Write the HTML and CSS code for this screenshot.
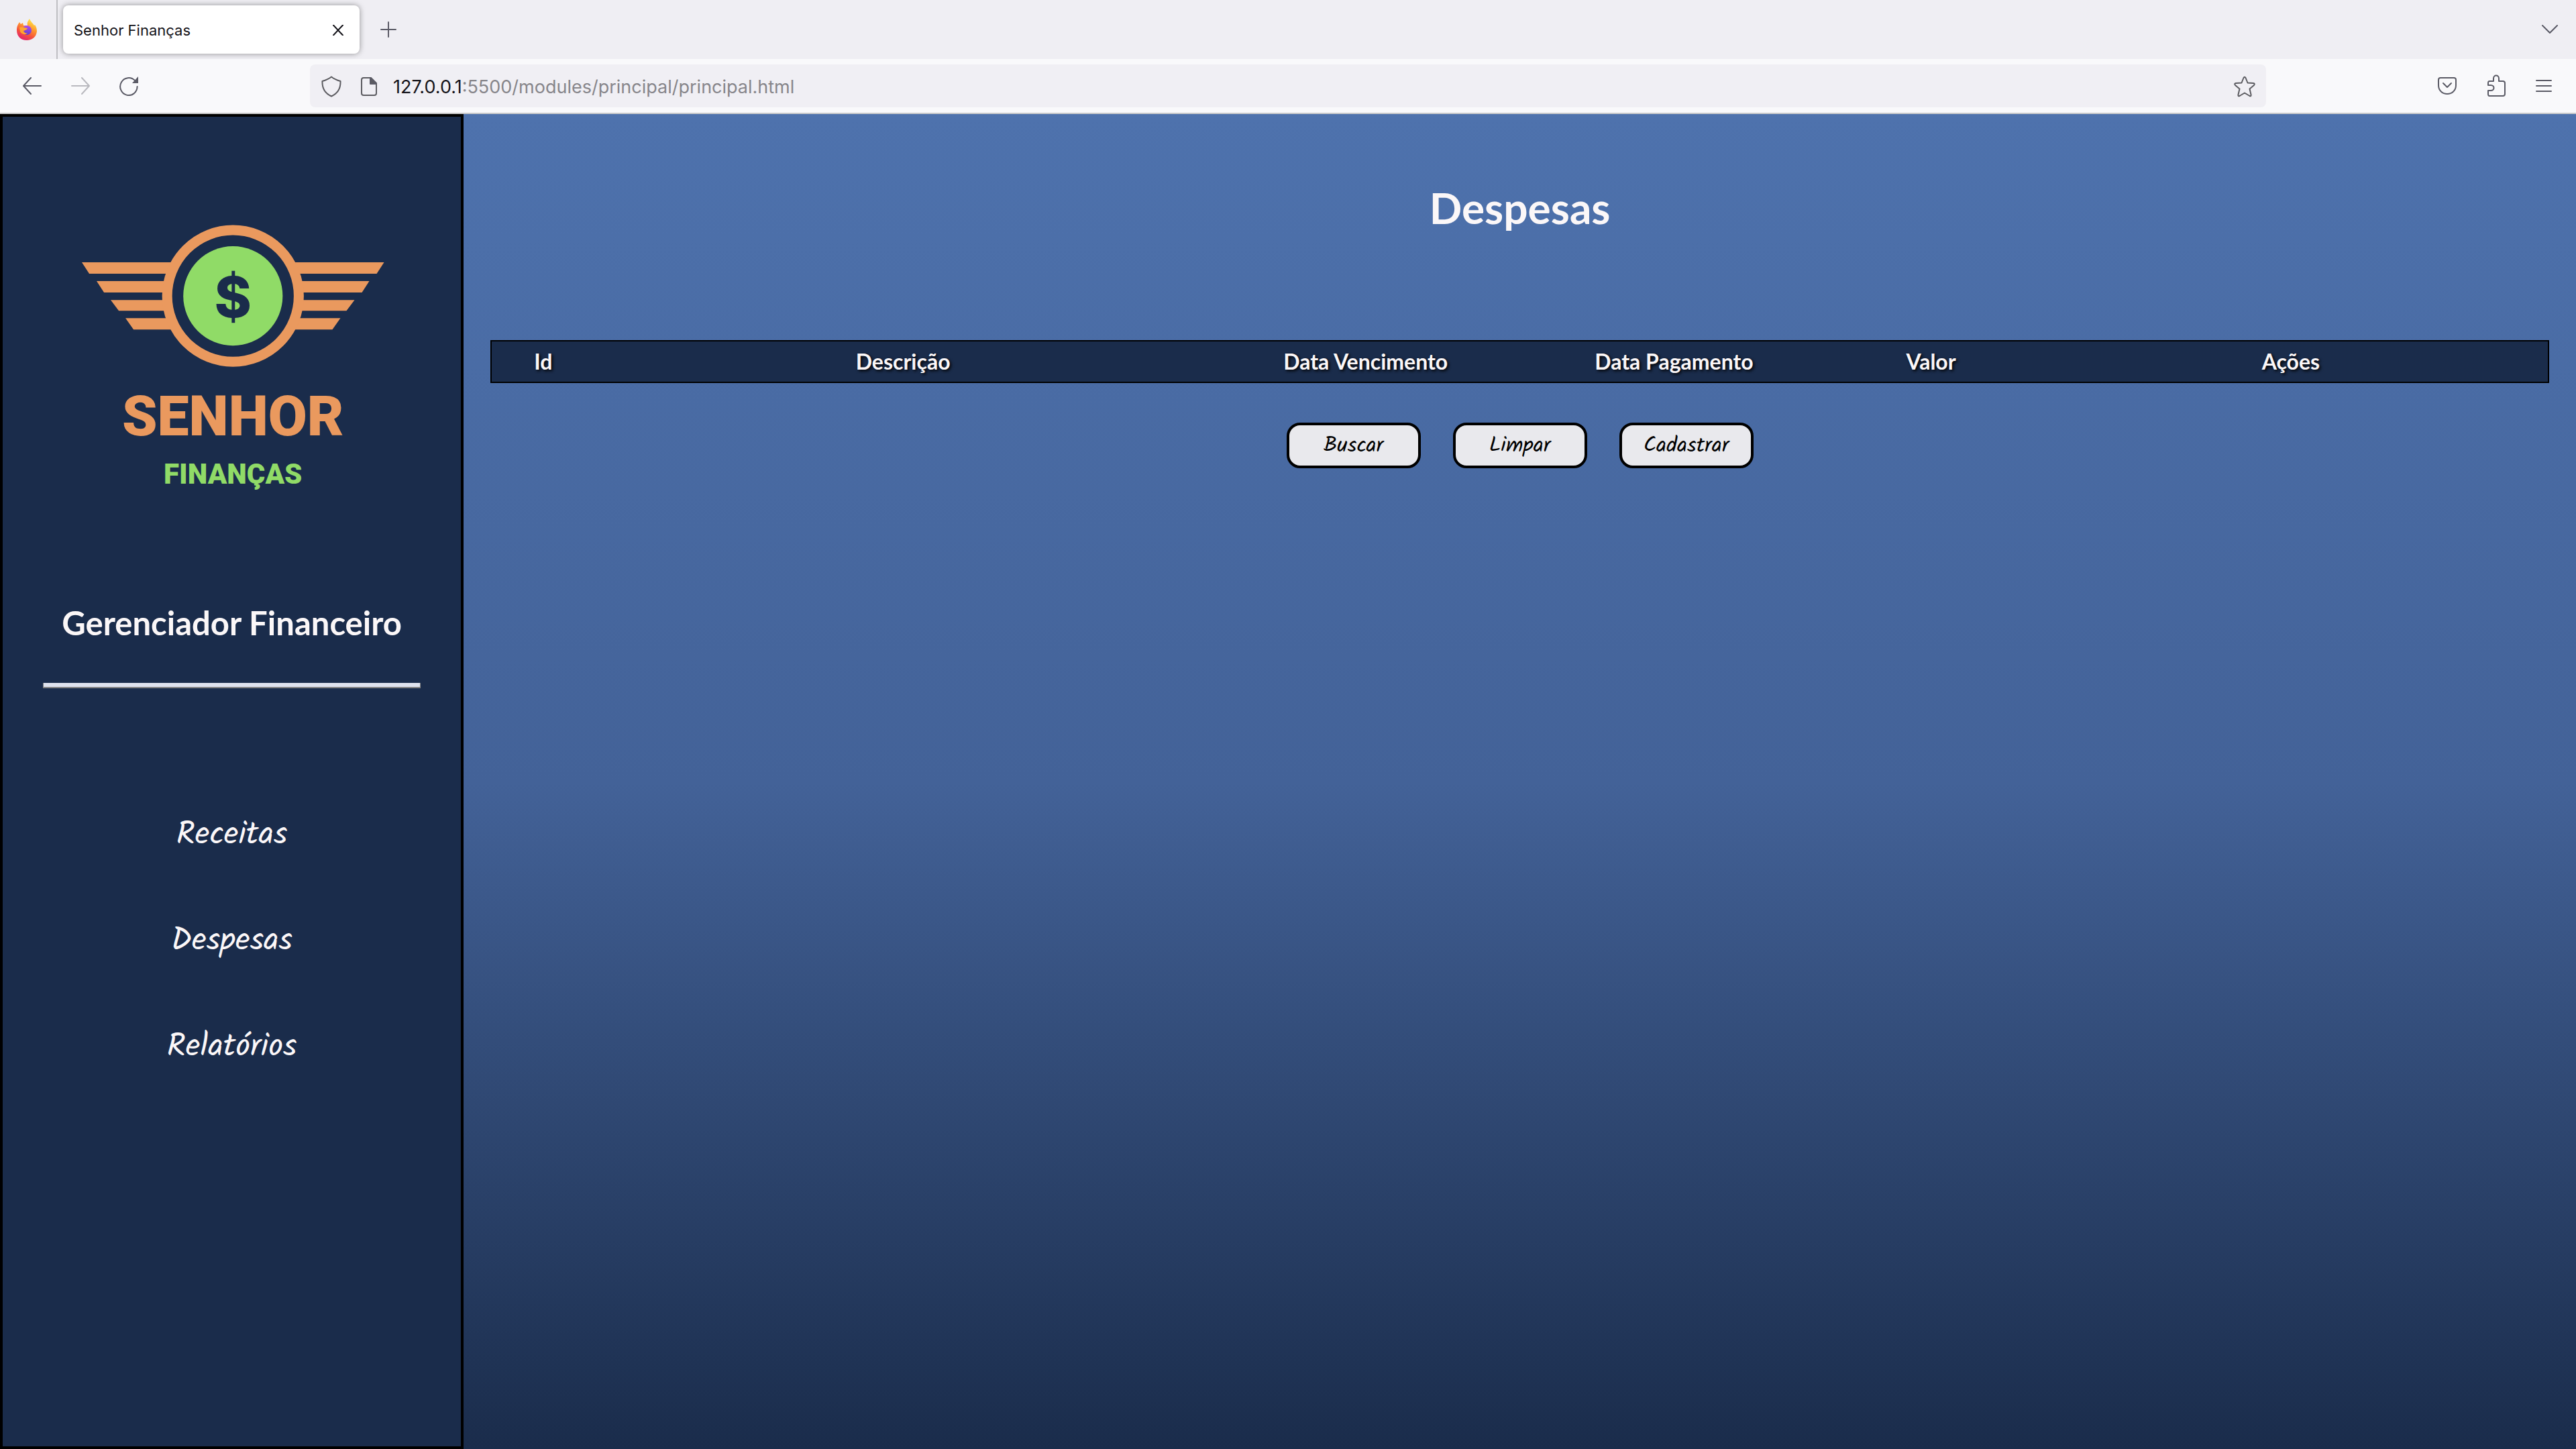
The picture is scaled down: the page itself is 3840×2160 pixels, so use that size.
FILE: index.html
```html
<!DOCTYPE html>
<html lang="pt-BR">
<head>
<meta charset="utf-8">
<title>Senhor Finanças</title>
<link rel="stylesheet" href="styles.css">
</head>
<body>
<header class="browser">
  <div class="tabbar">
    <div class="pinned">
      <svg width="32" height="34" viewBox="0 0 32 34" aria-hidden="true">
        <defs>
          <linearGradient id="flame" x1="0.8" y1="0" x2="0.3" y2="1"><stop offset="0" stop-color="#fff44f"/><stop offset="0.4" stop-color="#ff9a2e"/><stop offset="0.7" stop-color="#f5523c"/><stop offset="1" stop-color="#e0216f"/></linearGradient>
          <linearGradient id="globe" x1="0.6" y1="0" x2="0.4" y2="1"><stop offset="0" stop-color="#b14bf0"/><stop offset="1" stop-color="#5a3fd0"/></linearGradient>
        </defs>
        <path fill="url(#flame)" d="M1 18C1 12 3 9 5 6L7 9L10 7L11 11L17 11C16 6 18 4 20 1C22 6 25 7 27 11L28 10C31 14 31 18 31 20C30 28 24 33 16 33C7 33 1 27 1 18Z"/>
        <circle cx="16" cy="18" r="7" fill="url(#globe)"/>
        <path fill="#ffa52e" d="M5 14C9 13 12 14 17 15C16 18 13 18 11 19C12 22 15 23 17 22C14 26 8 24 6 20Z"/>
      </svg>
    </div>
    <div class="tab">
      <span>Senhor Finanças</span>
      <button class="icon close" aria-label="Fechar aba"><svg width="16" height="16" viewBox="0 0 16 16"><path class="dark" d="M1 0.5L15 15.5M15 0.5L1 15.5"/></svg></button>
    </div>
    <button class="icon newtab" aria-label="Nova aba"><svg width="24" height="24" viewBox="0 0 24 24"><path d="M12 1V23M1 12H23"/></svg></button>
    <button class="icon alltabs" aria-label="Listar abas"><svg width="26" height="16" viewBox="0 0 26 16"><path d="M2 2L13 13L24 2"/></svg></button>
  </div>
  <div class="toolbar">
    <div class="history">
      <button class="icon" aria-label="Voltar"><svg width="28" height="26" viewBox="0 0 28 26"><path d="M12 1L1 13L12 25M1 13H27"/></svg></button>
      <button class="icon" aria-label="Avançar" disabled><svg width="28" height="26" viewBox="0 0 28 26"><path d="M16 1L27 13L16 25M27 13H1"/></svg></button>
      <button class="icon" aria-label="Recarregar"><svg width="28" height="30" viewBox="0 0 28 30"><path d="M23 7A12.700 13 0 1 0 26.600 16"/><path class="solid" d="M28 1V11H19Z"/></svg></button>
    </div>
    <div class="urlbar">
      <svg width="30" height="32" viewBox="0 0 30 32" aria-hidden="true"><path class="gray" d="M15 1.500C12 4 7 6.500 1.500 8C1 19 5 26 15 30.500C25 26 29 19 28.500 8C23 6.500 18 4 15 1.500Z"/></svg>
      <svg class="doc" width="24" height="28" viewBox="0 0 24 28" aria-hidden="true"><path class="gray" d="M4 1H15L23 9V24Q23 27 20 27H4Q1 27 1 24V4Q1 1 4 1Z"/><path d="M14 1V10H23Z"/></svg>
      <p class="address">127.0.0.1<span>:5500/modules/principal/principal.html</span></p>
      <button class="icon" aria-label="Favoritar"><svg width="32" height="32" viewBox="0 0 32 32"><path class="gray" d="M14.500 3Q16 0.500 17.500 3L20.500 10.500L29 11Q32 11.500 30 14L23.500 19.500L25.500 28Q26 31 23.500 30L16 25.500L8.500 30Q6 31 6.500 28L8.500 19.500L2 14Q0 11.500 3 11L11.500 10.500Z"/></svg></button>
    </div>
    <div class="tools">
      <button class="icon" aria-label="Pocket"><svg width="28" height="28" viewBox="0 0 28 28"><path d="M4 2H24Q27 2 27 5V13C27 21 21 26 14 26S1 21 1 13V5Q1 2 4 2ZM8 10L14 16L20 10"/></svg></button>
      <button class="icon" aria-label="Extensões"><svg width="28" height="34" viewBox="0 0 28 34"><path d="M4 10H10V6C10 0 18 0 18 6V10H24Q27 10 27 13V29Q27 32 24 32H4Q2 32 2 29V24H6C12 24 12 16 6 16H2V13Q2 10 4 10Z"/></svg></button>
      <button class="icon" aria-label="Menu"><svg width="24" height="20" viewBox="0 0 24 20"><path d="M1 2H23M1 10H23M1 18H23"/></svg></button>
    </div>
  </div>
</header>
<div class="app">
  <aside class="sidebar">
    <svg class="logo" viewBox="-2 0 450 400" role="img" aria-label="Senhor Finanças">
      <g fill="#ea995e">
        <path d="M0 56H140V73H11ZM22 84H130V101H33ZM43 112H130V128H55ZM65 139H140V156H77Z"/>
        <path d="M450 56H310V73H439ZM428 84H320V101H417ZM406 112H320V128H394ZM385 139H310V156H373Z"/>
      </g>
      <circle cx="225" cy="106" r="98" fill="#1a2c4b" stroke="#ea995e" stroke-width="15"/>
      <circle cx="225" cy="106" r="74" fill="#90db67"/>
      <text class="coin" x="225" y="138">$</text>
      <text class="brand" x="225" y="314">SENHOR</text>
      <text class="brand-sub" x="225" y="386">FINANÇAS</text>
    </svg>
    <h2>Gerenciador Financeiro</h2>
    <hr>
    <nav>
      <a href="#receitas">Receitas</a>
      <a href="#despesas">Despesas</a>
      <a href="#relatorios">Relatórios</a>
    </nav>
  </aside>
  <main>
    <h1>Despesas</h1>
    <table>
      <thead>
        <tr><th class="w5">Id</th><th class="w30">Descrição</th><th class="w15">Data Vencimento</th><th class="w15">Data Pagamento</th><th class="w10">Valor</th><th class="w25">Ações</th></tr>
      </thead>
    </table>
    <div class="actions">
      <button>Buscar</button>
      <button>Limpar</button>
      <button>Cadastrar</button>
    </div>
  </main>
</div>
</body>
</html>
```
FILE: styles.css
```css
* { box-sizing: border-box; }
body {
  margin: 0;
  min-height: 100vh;
  display: flex;
  flex-direction: column;
  font-family: Lato, sans-serif;
  color: #fbf7f8;
}
h1, h2, p { margin: 0; }
svg { display: block; }

/* Browser frame */
.browser {
  font-family: Inter, sans-serif;
  border-bottom: 2px solid #cccccc;
}
.icon {
  border: 0;
  padding: 0;
  background: none;
}
.icon path, .urlbar path {
  fill: none;
  stroke: #5b5b66;
  stroke-width: 2;
  stroke-linecap: round;
  stroke-linejoin: round;
}
.icon .dark { stroke: #15141a; }
.icon .gray, .urlbar .gray { stroke: #5b5b60; }
.icon .solid { fill: #5b5b66; stroke: none; }
.urlbar .doc path + path { fill: #5b5b60; }
.icon:disabled { opacity: 0.4; }
.tabbar {
  display: flex;
  align-items: center;
  height: 88px;
  padding-right: 26px;
  background: #efeef3;
}
.pinned {
  display: flex;
  align-items: center;
  align-self: stretch;
  width: 86px;
  padding-left: 24px;
  border-right: 2px solid #bfbfc3;
}
.tab {
  display: flex;
  align-items: center;
  justify-content: space-between;
  width: 442px;
  height: 72px;
  margin-left: 8px;
  padding: 2px 24px 0 16px;
  border-radius: 8px;
  background: #fff;
  box-shadow: 0 0 8px rgba(0, 0, 0, 0.4);
  color: #15141a;
  font-size: 22px;
}
.newtab { margin-left: 31px; }
.alltabs { margin-left: auto; }
.toolbar {
  display: flex;
  align-items: center;
  height: 80px;
  padding: 0 36px 0 34px;
  background: #f9f9fb;
}
.history {
  display: flex;
  align-items: center;
  gap: 44px;
  margin-right: 256px;
}
.urlbar {
  flex: 1;
  display: flex;
  align-items: center;
  height: 64px;
  padding: 2px 16px 0 17px;
  border-radius: 8px;
  background: #f0eff4;
}
.doc { margin: 0 24px 0 29px; }
.address {
  flex: 1;
  font-size: 27px;
  color: #15141a;
}
.address span { color: #87868b; }
.tools {
  display: flex;
  align-items: center;
  gap: 45px;
  margin-left: 256px;
}

/* Application */
.app {
  flex: 1;
  display: flex;
}
.sidebar {
  width: 18%;
  padding: 161px 60px 0;
  border: 4px solid #000;
  background: #1a2c4b;
  text-align: center;
}
.logo {
  width: 80%;
  margin: 0 auto;
  overflow: visible;
}
.logo text { text-anchor: middle; }
.coin { font: 800 84px Inter, sans-serif; fill: #1a2c4b; }
.brand { font: 900 84px Roboto, sans-serif; fill: #ea995e; }
.brand-sub { font: 900 42px Roboto, sans-serif; fill: #90db67; }
h2 {
  margin-top: 163px;
  font-size: 49px;
  font-weight: 700;
  line-height: 60px;
  white-space: nowrap;
}
hr {
  height: 8px;
  margin: 60px 0 0;
  border: 0 solid #808080;
  border-width: 0 1px 2px;
  background: #dfe3ee;
}
nav {
  display: flex;
  flex-direction: column;
  align-items: center;
  gap: 98px;
  margin-top: 189px;
}
nav a {
  font: 400 48px/60px Kalam, cursive;
  color: inherit;
  text-decoration: none;
}
main {
  flex: 1;
  padding: 100px 40px 0;
  background: linear-gradient(#4e72ad, #436298 50%, #1a2c4b);
}
h1 {
  font-size: 64px;
  font-weight: 700;
  line-height: 80px;
  text-align: center;
}
table {
  width: 100%;
  margin-top: 157px;
  border: 2px solid #000;
  border-spacing: 0;
  table-layout: fixed;
  background: #1a2c4b;
}
th {
  height: 60px;
  padding: 0;
  font-size: 32px;
  font-weight: 700;
  line-height: 40px;
  text-shadow: 2px 2px 4px #000;
}
.w5 { width: 5%; }
.w10 { width: 10%; }
.w15 { width: 15%; }
.w25 { width: 25%; }
.w30 { width: 30%; }
.actions {
  display: flex;
  justify-content: center;
  gap: 48px;
  margin-top: 59px;
}
.actions button {
  width: 200px;
  height: 68px;
  padding: 1px 0 0;
  border: 4px solid #000;
  border-radius: 20px;
  background: #e9e9ed;
  color: #000;
  font: 400 32px/40px Kalam, cursive;
}
```
